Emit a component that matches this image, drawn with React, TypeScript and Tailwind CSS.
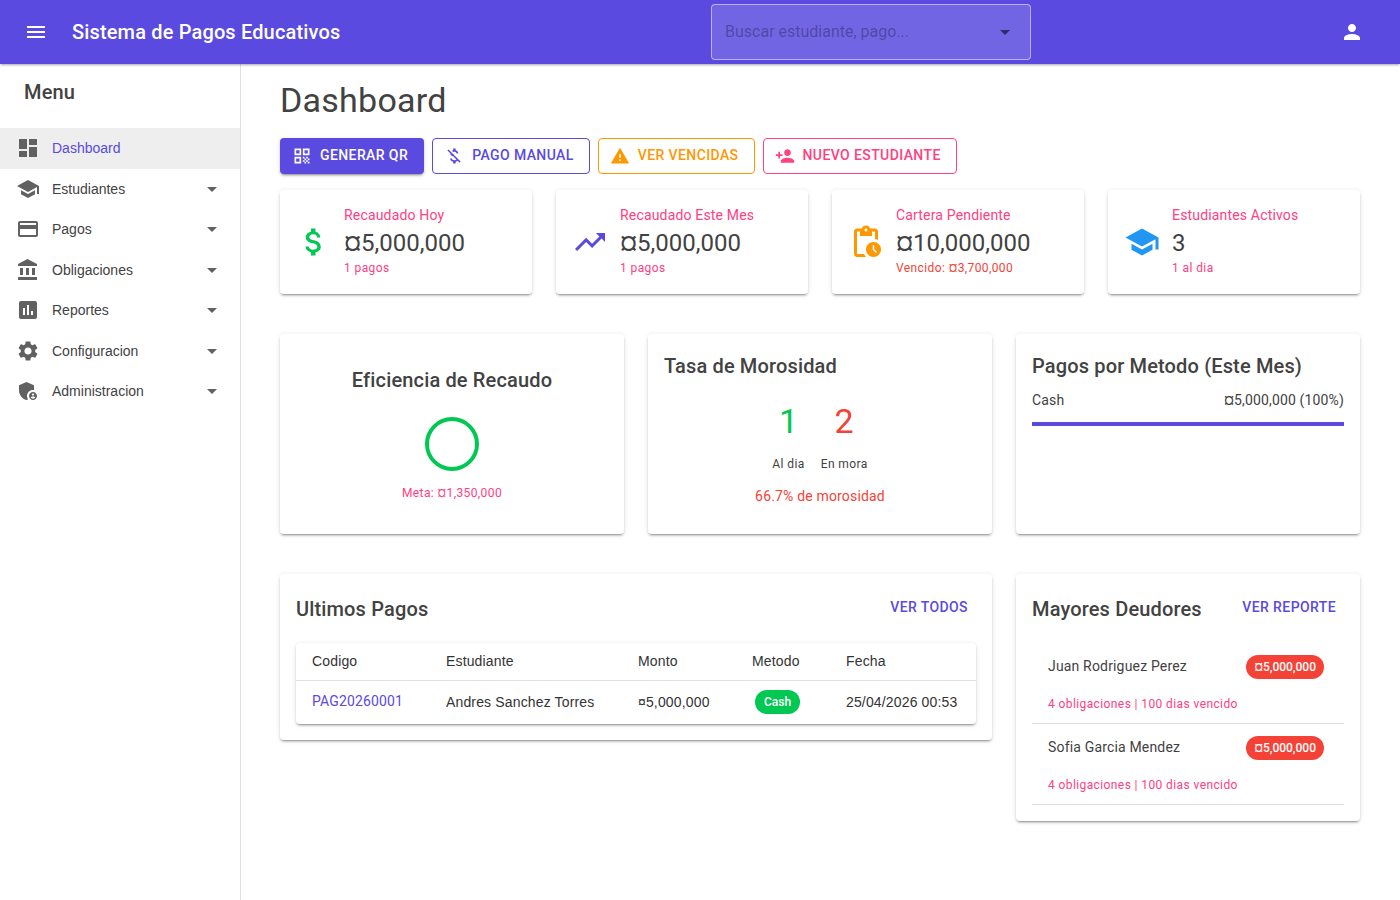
import React from "react";

const P = {
  menu: "M3 18h18v-2H3v2zm0-5h18v-2H3v2zm0-7v2h18V6H3z",
  person: "M12 12c2.21 0 4-1.79 4-4s-1.79-4-4-4-4 1.79-4 4 1.79 4 4 4zm0 2c-2.67 0-8 1.34-8 4v2h16v-2c0-2.66-5.33-4-8-4z",
  dashboard: "M3 13h8V3H3v10zm0 8h8v-6H3v6zm10 0h8V11h-8v10zm0-18v6h8V3h-8z",
  school: "M5 13.18v4L12 21l7-3.82v-4L12 17l-7-3.82zM12 3 1 9l11 6 9-4.91V17h2V9L12 3z",
  card: "M20 4H4c-1.11 0-1.99.89-1.99 2L2 18c0 1.11.89 2 2 2h16c1.11 0 2-.89 2-2V6c0-1.11-.89-2-2-2zm0 14H4v-6h16v6zm0-10H4V6h16v2z",
  bank: "M4 10v7h3v-7H4zm6 0v7h3v-7h-3zM2 22h19v-3H2v3zm14-12v7h3v-7h-3zm-4.5-9L2 6v2h19V6l-9.5-5z",
  assess: "M19 3H5c-1.1 0-2 .9-2 2v14c0 1.1.9 2 2 2h14c1.1 0 2-.9 2-2V5c0-1.1-.9-2-2-2zM9 17H7v-7h2v7zm4 0h-2V7h2v10zm4 0h-2v-4h2v4z",
  settings: "M19.14 12.94c.04-.3.06-.61.06-.94 0-.32-.02-.64-.07-.94l2.03-1.58c.18-.14.23-.41.12-.61l-1.92-3.32c-.12-.22-.37-.29-.59-.22l-2.39.96c-.5-.38-1.03-.7-1.62-.94l-.36-2.54c-.04-.24-.24-.41-.48-.41h-3.84c-.24 0-.43.17-.47.41l-.36 2.54c-.59.24-1.13.57-1.62.94l-2.39-.96c-.22-.08-.47 0-.59.22L2.74 8.87c-.12.21-.08.47.12.61l2.03 1.58c-.05.3-.09.63-.09.94s.02.64.07.94l-2.03 1.58c-.18.14-.23.41-.12.61l1.92 3.32c.12.22.37.29.59.22l2.39-.96c.5.38 1.03.7 1.62.94l.36 2.54c.05.24.24.41.48.41h3.84c.24 0 .44-.17.47-.41l.36-2.54c.59-.24 1.13-.56 1.62-.94l2.39.96c.22.08.47 0 .59-.22l1.92-3.32c.12-.22.07-.47-.12-.61l-2.01-1.58zM12 15.6c-1.98 0-3.6-1.62-3.6-3.6s1.62-3.6 3.6-3.6 3.6 1.62 3.6 3.6-1.62 3.6-3.6 3.6z",
  admin: "M17 11c.34 0 .67.04 1 .09V6.27L10.5 3 3 6.27v4.91c0 4.54 3.2 8.79 7.5 9.82.55-.13 1.08-.32 1.6-.55-.69-.98-1.1-2.17-1.1-3.45 0-3.31 2.69-6 6-6zM17 13c-2.21 0-4 1.79-4 4s1.79 4 4 4 4-1.79 4-4-1.79-4-4-4zm0 1.38c.62 0 1.12.51 1.12 1.12s-.51 1.12-1.12 1.12-1.12-.51-1.12-1.12.5-1.12 1.12-1.12zm0 5.37c-.93 0-1.74-.46-2.24-1.17.05-.72 1.51-1.08 2.24-1.08s2.19.36 2.24 1.08c-.5.71-1.31 1.17-2.24 1.17z",
  qr: "M3 11h8V3H3v8zm2-6h4v4H5V5zM3 21h8v-8H3v8zm2-6h4v4H5v-4zM13 3v8h8V3h-8zm6 6h-4V5h4v4zM19 19h2v2h-2zM13 13h2v2h-2zM15 15h2v2h-2zM13 17h2v2h-2zM15 19h2v2h-2zM17 17h2v2h-2zM17 13h2v2h-2zM19 15h2v2h-2z",
  moneyOff: "M12.5 6.9c1.78 0 2.44.85 2.5 2.1h2.21c-.07-1.72-1.12-3.3-3.21-3.81V3h-3v2.16c-.53.12-1.03.3-1.48.54l1.47 1.47c.41-.17.91-.27 1.51-.27zM5.33 4.06 4.06 5.33 7.5 8.77c0 2.08 1.56 3.21 3.91 3.91l3.51 3.51c-.34.48-1.05.91-2.42.91-2.06 0-2.87-.92-2.98-2.1h-2.2c.12 2.19 1.76 3.42 3.68 3.83V21h3v-2.15c.96-.18 1.82-.55 2.45-1.12l2.22 2.22 1.27-1.27L5.33 4.06z",
  warning: "M1 21h22L12 2 1 21zm12-3h-2v-2h2v2zm0-4h-2v-4h2v4z",
  personAdd: "M15 12c2.21 0 4-1.79 4-4s-1.79-4-4-4-4 1.79-4 4 1.79 4 4 4zm-9-2V7H4v3H1v2h3v3h2v-3h3v-2H6zm9 4c-2.67 0-8 1.34-8 4v2h16v-2c0-2.66-5.33-4-8-4z",
  money: "M11.8 10.9c-2.27-.59-3-1.2-3-2.15 0-1.09 1.01-1.85 2.7-1.85 1.78 0 2.44.85 2.5 2.1h2.21c-.07-1.72-1.12-3.3-3.21-3.81V3h-3v2.16c-1.94.42-3.5 1.68-3.5 3.61 0 2.31 1.91 3.46 4.7 4.13 2.5.6 3 1.48 3 2.41 0 .69-.49 1.79-2.7 1.79-2.06 0-2.87-.92-2.98-2.1h-2.2c.12 2.19 1.76 3.42 3.68 3.83V21h3v-2.15c1.95-.37 3.5-1.5 3.5-3.55 0-2.84-2.43-3.81-4.7-4.4z",
  trend: "m16 6 2.29 2.29-4.88 4.88-4-4L2 16.59 3.41 18l6-6 4 4 6.3-6.29L22 12V6z",
  pending: "M17 12c-2.76 0-5 2.24-5 5s2.24 5 5 5 5-2.24 5-5-2.24-5-5-5zm1.65 7.35L16.5 17.2V14h1v2.79l1.85 1.85-.7.71zM18 3h-3.18C14.4 1.84 13.3 1 12 1s-2.4.84-2.82 2H6c-1.1 0-2 .9-2 2v15c0 1.1.9 2 2 2h6.11c-.59-.57-1.07-1.25-1.42-2H6V5h2v3h8V5h2v5.08c.71.1 1.38.31 2 .6V5c0-1.1-.9-2-2-2zm-6 2c-.55 0-1-.45-1-1s.45-1 1-1 1 .45 1 1-.45 1-1 1z",
  drop: "M7 10l5 5 5-5z",
};

function Icon({ d, className }: { d: string; className: string }) {
  return (
    <svg viewBox="0 0 24 24" fill="currentColor" className={className}>
      <path d={d} />
    </svg>
  );
}

const elevation =
  "rounded shadow-[0px_3px_1px_-2px_rgba(0,0,0,0.2),0px_2px_2px_0px_rgba(0,0,0,0.14),0px_1px_5px_0px_rgba(0,0,0,0.12)]";
const paper = `bg-white ${elevation}`;
const h6 = "text-[20px] font-medium leading-[32px] tracking-[0.15px]";
const arial = "font-['Liberation_Sans',Arial,sans-serif]";

const nav = [
  { label: "Estudiantes", d: P.school },
  { label: "Pagos", d: P.card },
  { label: "Obligaciones", d: P.bank },
  { label: "Reportes", d: P.assess },
  { label: "Configuracion", d: P.settings },
  { label: "Administracion", d: P.admin },
];

const stats = [
  { label: "Recaudado Hoy", value: "¤5,000,000", sub: "1 pagos", d: P.money, icon: "text-[#00c853]", subC: "text-[#ff4081]" },
  { label: "Recaudado Este Mes", value: "¤5,000,000", sub: "1 pagos", d: P.trend, icon: "text-[#5a4ae0]", subC: "text-[#ff4081]" },
  { label: "Cartera Pendiente", value: "¤10,000,000", sub: "Vencido: ¤3,700,000", d: P.pending, icon: "text-[#ff9800]", subC: "text-[#f44336]" },
  { label: "Estudiantes Activos", value: "3", sub: "1 al dia", d: P.school, icon: "text-[#2196f3]", subC: "text-[#ff4081]" },
];

const actions = [
  { label: "Pago Manual", d: P.moneyOff, c: "text-[#5a4ae0] border-[#5a4ae0]" },
  { label: "Ver Vencidas", d: P.warning, c: "text-[#ff9800] border-[#ff9800]" },
  { label: "Nuevo Estudiante", d: P.personAdd, c: "text-[#ff4081] border-[#ff4081]" },
];

const debtors = ["Juan Rodriguez Perez", "Sofia Garcia Mendez"];

export default function App() {
  return (
    <div className="min-h-[900px] bg-white text-[#424242] font-['Roboto',sans-serif] flex flex-col">
      <header className={`relative z-10 h-16 bg-[#5a4ae0] text-white flex items-center pl-6 pr-9 shadow-[0px_2px_2px_-1px_rgba(0,0,0,0.25),0px_1px_3px_0px_rgba(0,0,0,0.12)]`}>
        <Icon d={P.menu} className="w-6 h-6" />
        <div className={`ml-6 w-[639px] ${h6}`}>Sistema de Pagos Educativos</div>
        <div className="w-[320px] h-14 rounded border border-white/50 bg-white/15 flex items-center pl-[13px] pr-[13px]">
          <span className="flex-1 text-[16px] text-black/30">Buscar estudiante, pago...</span>
          <Icon d={P.drop} className="w-6 h-6 text-black/55" />
        </div>
        <div className="flex-1 flex justify-end">
          <Icon d={P.person} className="w-6 h-6" />
        </div>
      </header>

      <div className="flex flex-1">
        <aside className="w-[241px] shrink-0 border-r border-[#e0e0e0] min-h-[836px]">
          <div className={`pl-6 pt-3 h-16 ${h6}`}>Menu</div>
          <div className={`h-[40.5px] bg-[#eeeeee] flex items-center pl-4 text-[14px] text-[#5a4ae0] ${arial}`}>
            <Icon d={P.dashboard} className="w-6 h-6 text-[#616161] mr-3" />
            <span className="pt-[0.6px]">Dashboard</span>
          </div>
          {nav.map((n) => (
            <div key={n.label} className={`h-[40.5px] flex items-center pl-4 pr-4 text-[14px] text-[#424242] ${arial}`}>
              <Icon d={n.d} className="w-6 h-6 text-[#616161] mr-3" />
              <span className="flex-1 pt-[0.6px]">{n.label}</span>
              <Icon d={P.drop} className="w-6 h-6 text-[#616161]" />
            </div>
          ))}
        </aside>

        <main className="flex-1 pl-[39px] pr-10 pt-[15px]">
          <h1 className="text-[34px] leading-[42px] tracking-[0.25px] font-normal">Dashboard</h1>

          <div className="flex gap-2 mt-[17px]">
            <div className={`h-9 px-4 pb-px bg-[#5a4ae0] text-white flex items-center gap-2 text-[14px] font-medium uppercase tracking-[0.4px] ${elevation}`}>
              <Icon d={P.qr} className="w-5 h-5 -ml-1" />
              Generar QR
            </div>
            {actions.map((a) => (
              <div key={a.label} className={`h-9 px-[15px] pb-px rounded border flex items-center gap-2 text-[14px] font-medium uppercase tracking-[0.4px] ${a.c}`}>
                <Icon d={a.d} className="w-5 h-5 -ml-1" />
                {a.label}
              </div>
            ))}
          </div>

          <div className="grid grid-cols-4 gap-6 mt-4">
            {stats.map((s) => (
              <div key={s.label} className={`${paper} h-[104px] p-4 flex items-center gap-3`}>
                <Icon d={s.d} className={`w-9 h-9 shrink-0 ${s.icon}`} />
                <div className="mb-[2px]">
                  <div className="text-[14px] leading-[20px] text-[#ff4081] tracking-[0.17px]">{s.label}</div>
                  <div className="text-[24px] leading-[32px] mt-[2px]">{s.value}</div>
                  <div className={`text-[12px] leading-[18px] tracking-[0.4px] ${s.subC}`}>{s.sub}</div>
                </div>
              </div>
            ))}
          </div>

          <div className="grid grid-cols-3 gap-6 mt-10">
            <div className={`${paper} h-[200px] p-4 flex flex-col items-center`}>
              <div className={`mt-[14px] ${h6}`}>Eficiencia de Recaudo</div>
              <svg viewBox="0 0 56 56" className="w-14 h-14 mt-5">
                <circle cx="28" cy="28" r="25" fill="none" stroke="#00c853" strokeWidth="4" />
              </svg>
              <div className="text-[12px] leading-[18px] tracking-[0.4px] text-[#ff4081] mt-[12px]">Meta: ¤1,350,000</div>
            </div>

            <div className={`${paper} h-[200px] p-4`}>
              <div className={h6}>Tasa de Morosidad</div>
              <div className="flex justify-center gap-4 mt-[18px]">
                <div className="text-center">
                  <div className="text-[34px] leading-[42px] text-[#00c853]">1</div>
                  <div className="text-[12px] leading-[18px] tracking-[0.4px] mt-[13px]">Al dia</div>
                </div>
                <div className="text-center">
                  <div className="text-[34px] leading-[42px] text-[#f44336]">2</div>
                  <div className="text-[12px] leading-[18px] tracking-[0.4px] mt-[13px]">En mora</div>
                </div>
              </div>
              <div className="text-center text-[14px] leading-[20px] tracking-[0.17px] text-[#f44336] mt-[13px]">66.7% de morosidad</div>
            </div>

            <div className={`${paper} h-[200px] p-4`}>
              <div className={h6}>Pagos por Metodo (Este Mes)</div>
              <div className="flex justify-between text-[14px] leading-[20px] tracking-[0.15px] mt-[8px]">
                <span>Cash</span>
                <span>¤5,000,000 (100%)</span>
              </div>
              <div className="h-1 bg-[#5a4ae0] mt-[12px]" />
            </div>
          </div>

          <div className="grid grid-cols-3 gap-6 mt-10 items-start">
            <div className={`${paper} col-span-2 p-4`}>
              <div className="flex justify-between items-start pr-2 h-[53px]">
                <div className={`mt-[3px] ${h6}`}>Ultimos Pagos</div>
                <div className="text-[14px] font-medium uppercase tracking-[0.4px] text-[#5a4ae0] leading-[20px] mt-[7px]">Ver todos</div>
              </div>
              <div className={paper}>
                <table className={`w-full table-fixed text-[14px] tracking-[0.15px] text-left text-[#333333] ${arial}`}>
                  <thead>
                    <tr className="h-[37px] border-b border-[#e0e0e0]">
                      <th className="w-[134px] pl-4 font-normal">Codigo</th>
                      <th className="w-[192px] pl-4 font-normal">Estudiante</th>
                      <th className="w-[114px] pl-4 font-normal">Monto</th>
                      <th className="w-[94px] pl-4 font-normal">Metodo</th>
                      <th className="pl-4 font-normal">Fecha</th>
                    </tr>
                  </thead>
                  <tbody>
                    <tr className="h-[44px]">
                      <td className="pl-4 pb-[2px] text-[#5a4ae0] font-['Roboto',sans-serif]">PAG20260001</td>
                      <td className="pl-4">Andres Sanchez Torres</td>
                      <td className="pl-4">¤5,000,000</td>
                      <td className="pl-[19px]">
                        <span className="inline-flex h-6 items-center rounded-full bg-[#00c853] text-white text-[12px] font-medium tracking-normal font-['Roboto',sans-serif] px-[9px]">Cash</span>
                      </td>
                      <td className="pl-4">25/04/2026 00:53</td>
                    </tr>
                  </tbody>
                </table>
              </div>
            </div>

            <div className={`${paper} p-4`}>
              <div className="flex justify-between items-start pr-2 h-[53px]">
                <div className={`mt-[3px] ${h6}`}>Mayores Deudores</div>
                <div className="text-[14px] font-medium uppercase tracking-[0.4px] text-[#5a4ae0] leading-[20px] mt-[7px]">Ver reporte</div>
              </div>
              {debtors.map((n) => (
                <div key={n} className="h-[81px] border-b border-[#e0e0e0] px-4 pt-[12px]">
                  <div className="flex justify-between items-center pr-1 h-6">
                    <span className="text-[14px] tracking-[0.17px] pb-[1px]">{n}</span>
                    <span className="inline-flex h-6 items-center rounded-full bg-[#f44336] text-white text-[12px] font-medium px-2">¤5,000,000</span>
                  </div>
                  <div className="text-[12px] leading-[18px] tracking-[0.4px] text-[#ff4081] mt-[16px]">4 obligaciones | 100 dias vencido</div>
                </div>
              ))}
            </div>
          </div>
        </main>
      </div>
    </div>
  );
}
